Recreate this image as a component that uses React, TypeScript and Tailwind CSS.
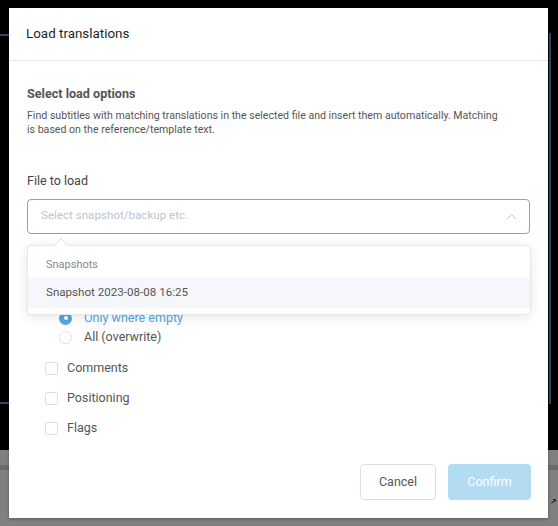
import React from 'react';

function Checkbox({ label }: { label: string }) {
	return (
		<label className="flex h-[30px] items-center gap-[9px]">
			<span className="h-[13px] w-[13px] rounded-[2px] border border-[#dcdfe6] bg-white" />
			<span className="text-[12.5px] text-[#555]">{label}</span>
		</label>
	);
}

export default function App() {
	return (
		<div
			className="relative h-[526px] w-[558px] overflow-hidden bg-black"
			style={{ fontFamily: 'Roboto, "Liberation Sans", sans-serif' }}
		>
			{/* dimmed app behind the modal */}
			<div className="absolute left-0 top-[34px] h-[2px] w-[9px] bg-[#2f4a5e]" />
			<div className="absolute left-0 top-[402px] h-[2px] w-[9px] bg-[#2f4a5e]" />
			<div className="absolute left-[549px] top-[33px] h-[371px] w-[2px] bg-[#2f4a5e]" />
			<div className="absolute bottom-0 left-0 right-0 h-[76px] bg-[#808080]" />
			<div className="absolute left-0 right-0 top-[465px] h-[5px] bg-[#6a6a6a]" />
			<div className="absolute left-[550px] top-[498px] text-[8px] leading-none text-black">↗</div>

			<div className="relative ml-[9px] mt-[8px] flex h-[510px] w-[539px] flex-col bg-white shadow-[0_1px_3px_rgba(0,0,0,0.3)]">
				<div className="flex h-[53px] items-center border-b border-[#e4e7ed] px-[17px] pt-[1px] text-[13.4px] text-[#1f1f1f]">
					Load translations
				</div>

				<div className="relative flex-1 px-[18px] pt-[24px]">
					<div className="text-[12.6px] font-bold text-[#555]">Select load options</div>
					<p className="mt-[5px] text-[10.6px] leading-[14px] text-[#555]">
						Find subtitles with matching translations in the selected file and insert them automatically. Matching
						<br />
						is based on the reference/template text.
					</p>

					<div className="mt-[35px] text-[12.5px] text-[#444]">File to load</div>
					<div className="mt-[8px] flex h-[35px] items-center justify-between rounded-[4px] border border-[#5eb2e6] pl-[13px] pr-[12px]">
						<span className="text-[11.6px] text-[#c0c4cc]">Select snapshot/backup etc.</span>
						<svg width="11" height="7" viewBox="0 0 11 7" fill="none">
							<path d="M1 6 L5.5 1.5 L10 6" stroke="#c0c4cc" strokeWidth="1" />
						</svg>
					</div>

					<div className="mt-[75px] flex flex-col pl-[32px]">
						<label className="flex h-[19px] items-center gap-[12px]">
							<span className="flex h-[13px] w-[13px] items-center justify-center rounded-full bg-[#4fa9e0]">
								<span className="h-[4px] w-[4px] rounded-full bg-white" />
							</span>
							<span className="text-[12.5px] text-[#4fa9e0]">Only where empty</span>
						</label>
						<label className="flex h-[19px] items-center gap-[12px]">
							<span className="h-[13px] w-[13px] rounded-full border border-[#dcdfe6] bg-white" />
							<span className="text-[12.5px] text-[#555]">All (overwrite)</span>
						</label>
					</div>

					<div className="mt-[7px] flex flex-col pl-[18px]">
						<Checkbox label="Comments" />
						<Checkbox label="Positioning" />
						<Checkbox label="Flags" />
					</div>

					{/* open select dropdown */}
					<div className="absolute left-[18px] right-[17px] top-[184px] rounded-[4px] border border-[#e4e7ed] bg-white py-[6px] shadow-[0_2px_12px_rgba(0,0,0,0.1)]">
						<div className="absolute -top-[6px] left-[28px] h-[10px] w-[10px] rotate-45 border-l border-t border-[#e4e7ed] bg-white" />
						<div className="flex h-[26px] items-center px-[18px] text-[11px] text-[#8a8a8a]">Snapshots</div>
						<div className="flex h-[30px] items-center bg-[#f5f7fa] px-[18px] text-[11.6px] text-[#555]">
							Snapshot 2023-08-08 16:25
						</div>
					</div>
				</div>

				<div className="flex justify-end gap-[12px] px-[17px] pb-[18px]">
					<button className="h-[36px] w-[76px] rounded-[4px] border border-[#dcdfe6] bg-white text-[12.5px] text-[#555]">
						Cancel
					</button>
					<button className="h-[36px] w-[83px] rounded-[4px] bg-[#b3dcf3] text-[12.5px] text-white">Confirm</button>
				</div>
			</div>
		</div>
	);
}
